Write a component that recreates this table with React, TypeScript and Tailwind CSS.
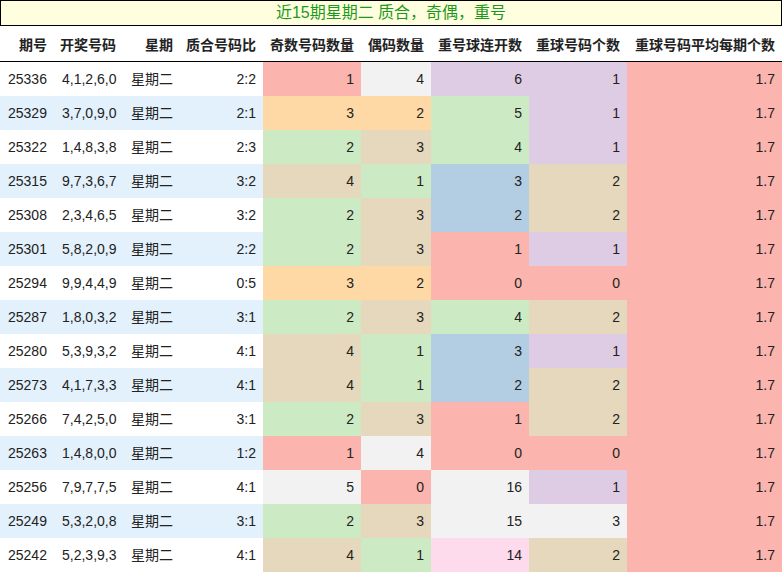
import React from 'react';

// Pastel1 palette used for cell shading
const C = {
  r: 'bg-[#fbb4ae]',
  b: 'bg-[#b3cde3]',
  g: 'bg-[#ccebc5]',
  p: 'bg-[#decbe4]',
  o: 'bg-[#fed9a6]',
  t: 'bg-[#e5d8bd]',
  k: 'bg-[#fddaec]',
  w: 'bg-[#f2f2f2]',
};

type Key = keyof typeof C;

interface Row {
  issue: string;
  nums: string;
  ratio: string;
  odd: [number, Key];
  even: [number, Key];
  streak: [number, Key];
  repeat: [number, Key];
}

const rows: Row[] = [
  { issue: '25336', nums: '4,1,2,6,0', ratio: '2:2', odd: [1, 'r'], even: [4, 'w'], streak: [6, 'p'], repeat: [1, 'p'] },
  { issue: '25329', nums: '3,7,0,9,0', ratio: '2:1', odd: [3, 'o'], even: [2, 'o'], streak: [5, 'g'], repeat: [1, 'p'] },
  { issue: '25322', nums: '1,4,8,3,8', ratio: '2:3', odd: [2, 'g'], even: [3, 't'], streak: [4, 'g'], repeat: [1, 'p'] },
  { issue: '25315', nums: '9,7,3,6,7', ratio: '3:2', odd: [4, 't'], even: [1, 'g'], streak: [3, 'b'], repeat: [2, 't'] },
  { issue: '25308', nums: '2,3,4,6,5', ratio: '3:2', odd: [2, 'g'], even: [3, 't'], streak: [2, 'b'], repeat: [2, 't'] },
  { issue: '25301', nums: '5,8,2,0,9', ratio: '2:2', odd: [2, 'g'], even: [3, 't'], streak: [1, 'r'], repeat: [1, 'p'] },
  { issue: '25294', nums: '9,9,4,4,9', ratio: '0:5', odd: [3, 'o'], even: [2, 'o'], streak: [0, 'r'], repeat: [0, 'r'] },
  { issue: '25287', nums: '1,8,0,3,2', ratio: '3:1', odd: [2, 'g'], even: [3, 't'], streak: [4, 'g'], repeat: [2, 't'] },
  { issue: '25280', nums: '5,3,9,3,2', ratio: '4:1', odd: [4, 't'], even: [1, 'g'], streak: [3, 'b'], repeat: [1, 'p'] },
  { issue: '25273', nums: '4,1,7,3,3', ratio: '4:1', odd: [4, 't'], even: [1, 'g'], streak: [2, 'b'], repeat: [2, 't'] },
  { issue: '25266', nums: '7,4,2,5,0', ratio: '3:1', odd: [2, 'g'], even: [3, 't'], streak: [1, 'r'], repeat: [2, 't'] },
  { issue: '25263', nums: '1,4,8,0,0', ratio: '1:2', odd: [1, 'r'], even: [4, 'w'], streak: [0, 'r'], repeat: [0, 'r'] },
  { issue: '25256', nums: '7,9,7,7,5', ratio: '4:1', odd: [5, 'w'], even: [0, 'r'], streak: [16, 'w'], repeat: [1, 'p'] },
  { issue: '25249', nums: '5,3,2,0,8', ratio: '3:1', odd: [2, 'g'], even: [3, 't'], streak: [15, 'w'], repeat: [3, 'w'] },
  { issue: '25242', nums: '5,2,3,9,3', ratio: '4:1', odd: [4, 't'], even: [1, 'g'], streak: [14, 'k'], repeat: [2, 't'] },
];

const headers = ['期号', '开奖号码', '星期', '质合号码比', '奇数号码数量', '偶码数量', '重号球连开数', '重球号码个数', '重球号码平均每期个数'];

const grid = 'grid grid-cols-[54px_69px_57px_83px_98px_70px_98px_98px_155px]';

export default function App() {
  return (
    <div className="w-[782px] bg-white text-[14px] text-[#222]" style={{ fontFamily: '"Liberation Sans", "Noto Sans CJK SC", sans-serif' }}>
      <div className="h-[26px] border border-black bg-[#ffffe0] flex items-center justify-center text-[16px] text-[#1c991c]">
        近15期星期二 质合，奇偶，重号
      </div>
      <div className={`${grid} h-[36px] pt-[3px] border-b border-black font-bold`}>
        {headers.map((h) => (
          <div key={h} className="flex items-center justify-end pr-[7px] whitespace-nowrap">
            {h}
          </div>
        ))}
      </div>
      {rows.map((r, i) => (
        <div key={r.issue} className={`${grid} h-[34px] ${i % 2 === 1 ? 'bg-[#e3f1fc]' : 'bg-white'}`}>
          <div className="flex items-center pl-[8px]">{r.issue}</div>
          <div className="flex items-center pl-[8px]">{r.nums}</div>
          <div className="flex items-center pl-[8px]">星期二</div>
          <div className="flex items-center justify-end pr-[7px]">{r.ratio}</div>
          {[r.odd, r.even, r.streak, r.repeat].map(([v, c], j) => (
            <div key={j} className={`flex items-center justify-end pr-[7px] ${C[c]}`}>
              {v}
            </div>
          ))}
          <div className={`flex items-center justify-end pr-[7px] ${C.r}`}>1.7</div>
        </div>
      ))}
    </div>
  );
}
